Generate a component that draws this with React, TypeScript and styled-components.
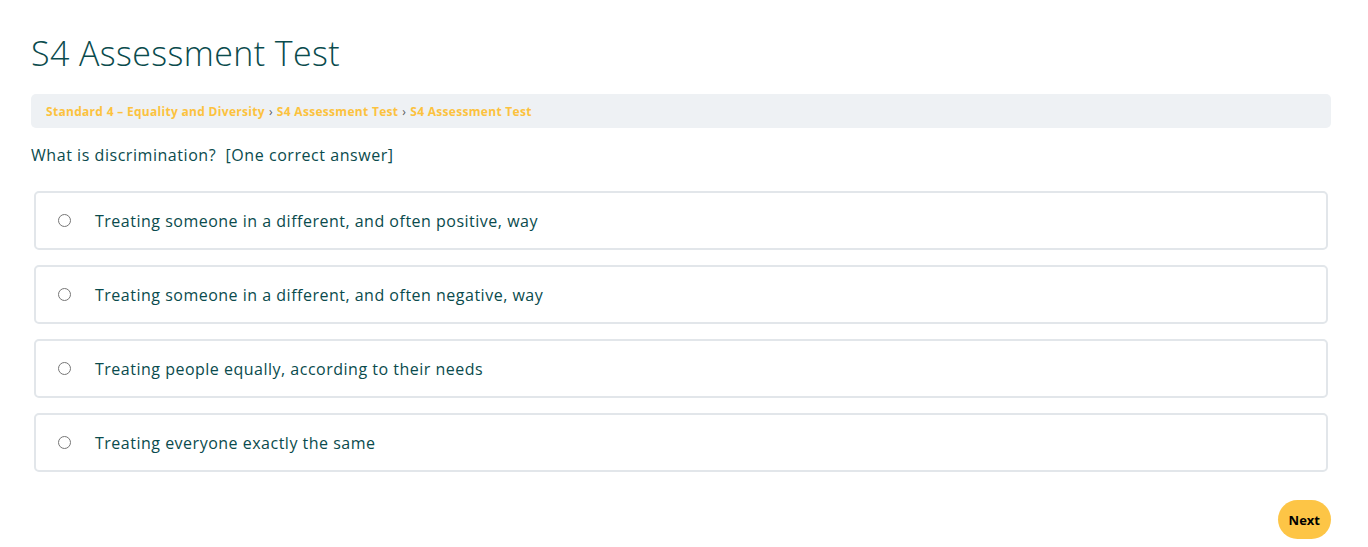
import React from "react";
import styled, { createGlobalStyle } from "styled-components";

const Global = createGlobalStyle`
  html, body { margin: 0; padding: 0; background: #ffffff; }
  body { font-family: "Open Sans", "Liberation Sans", sans-serif; color: #0a4b4d; }
  * { box-sizing: border-box; }
`;

const Page = styled.main`
  padding: 30px 37px 0 31px;
  display: flex;
  flex-direction: column;
`;

const Title = styled.h1`
  margin: 0;
  font-size: 34px;
  font-weight: 300;
  line-height: 46px;
  letter-spacing: 0.4px;
  color: #0a4b4d;
`;

const Crumbs = styled.nav`
  margin-top: 18px;
  height: 34px;
  border-radius: 5px;
  background: #eef1f4;
  display: flex;
  align-items: center;
  padding: 0 15px;
  font-size: 12px;
  font-weight: 700;
  letter-spacing: 0.3px;
  color: #fcc23e;
`;

const Sep = styled.span`
  color: #5a5a5a;
  font-weight: 400;
  margin: 0 4px;
`;

const Question = styled.p`
  margin: 16px 0 0;
  font-size: 16px;
  line-height: 22px;
  letter-spacing: 0.55px;
`;

const Options = styled.div`
  margin: 25px 3px 0 3px;
  display: flex;
  flex-direction: column;
  gap: 15px;
`;

const Option = styled.label`
  height: 59px;
  border: 2px solid #e2e6ea;
  border-radius: 5px;
  display: flex;
  align-items: center;
  padding-left: 22px;
  font-size: 16px;
  letter-spacing: 0.5px;
  cursor: pointer;
`;

const Radio = styled.input`
  width: 13px;
  height: 13px;
  margin: 0 24px 0 0;
`;

const Footer = styled.div`
  display: flex;
  justify-content: flex-end;
  margin-top: 28px;
`;

const Next = styled.button`
  height: 39px;
  padding: 0 11px;
  border: none;
  border-radius: 20px;
  background: #fdc546;
  color: #000;
  font-family: inherit;
  font-size: 13px;
  font-weight: 700;
`;

const answers = [
  "Treating someone in a different, and often positive, way",
  "Treating someone in a different, and often negative, way",
  "Treating people equally, according to their needs",
  "Treating everyone exactly the same",
];

export default function App() {
  return (
    <>
      <Global />
      <Page>
        <Title>S4 Assessment Test</Title>
        <Crumbs>
          Standard 4 – Equality and Diversity<Sep>›</Sep>S4 Assessment Test<Sep>›</Sep>S4 Assessment Test
        </Crumbs>
        <Question>What is discrimination?&nbsp; [One correct answer]</Question>
        <Options>
          {answers.map((a) => (
            <Option key={a}>
              <Radio type="radio" name="answer" />
              {a}
            </Option>
          ))}
        </Options>
        <Footer>
          <Next>Next</Next>
        </Footer>
      </Page>
    </>
  );
}
